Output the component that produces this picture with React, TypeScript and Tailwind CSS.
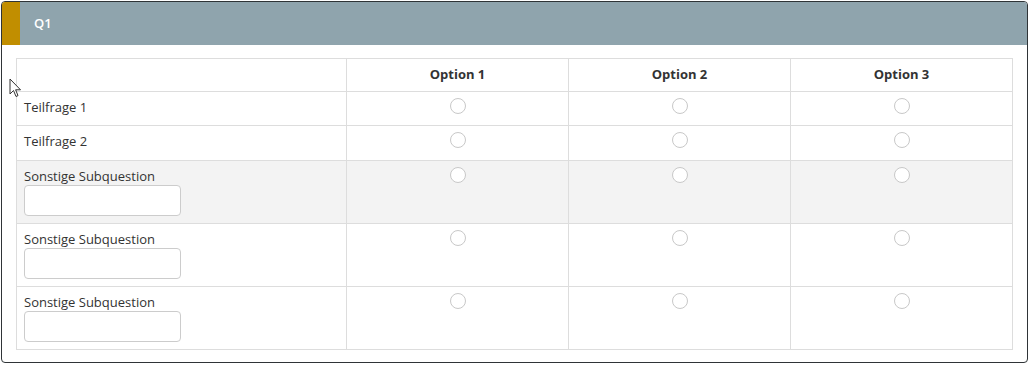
const options = ["Option 1", "Option 2", "Option 3"];

type Row = { label: string; other?: boolean; shaded?: boolean; h: string };

const rows: Row[] = [
  { label: "Teilfrage 1", h: "h-[34px]" },
  { label: "Teilfrage 2", h: "h-[35px]" },
  { label: "Sonstige Subquestion", other: true, shaded: true, h: "h-[63px]" },
  { label: "Sonstige Subquestion", other: true, h: "h-[63px]" },
  { label: "Sonstige Subquestion", other: true, h: "h-[63px]" },
];

function Radio() {
  return <span className="mx-auto block h-[16px] w-[16px] rounded-full border border-[#c8c8c8] bg-white" />;
}

function Cursor() {
  return (
    <svg className="absolute left-[9px] top-[78px]" width="13" height="20" viewBox="0 0 13 20">
      <path d="M1 1 L1 16 L4.5 12.5 L7 18.5 L9 17.6 L6.6 11.8 L11.5 11.8 Z" fill="#fff" stroke="#333" strokeWidth="1" strokeLinejoin="round" />
    </svg>
  );
}

export default function App() {
  return (
    <div className="relative h-[365px] w-[1029px] bg-white p-px font-['Open_Sans',sans-serif] text-[13px] text-[#333]">
      <div className="h-[362px] overflow-hidden rounded-[4px] border border-[#2f3437] bg-white">
        <div className="flex h-[43px] items-center bg-[#8fa4ad]">
          <div className="h-full w-[18px] bg-[#c18e00]" />
          <span className="pl-[14px] text-[13px] font-semibold text-white">Q1</span>
        </div>
        <div className="px-[14px] pt-[13px]">
          <table className="w-[996px] table-fixed border-collapse">
            <colgroup>
              <col className="w-[330px]" />
              <col className="w-[222px]" />
              <col className="w-[222px]" />
              <col className="w-[222px]" />
            </colgroup>
            <thead>
              <tr className="h-[33px]">
                <th className="border border-[#dddddd]" />
                {options.map((o) => (
                  <th key={o} className="border border-[#dddddd] text-center text-[13px] font-bold text-[#333]">
                    {o}
                  </th>
                ))}
              </tr>
            </thead>
            <tbody>
              {rows.map((r, i) => (
                <tr key={i} className={`${r.h} ${r.shaded ? "bg-[#f3f3f3]" : "bg-white"}`}>
                  <td className="border border-[#dddddd] px-[7px] pt-[6px] align-top">
                    <div className="leading-[18px]">{r.label}</div>
                    {r.other && (
                      <input className="block h-[31px] w-[157px] rounded-[4px] border border-[#cccccc] bg-white" />
                    )}
                  </td>
                  {options.map((o) => (
                    <td key={o} className="border border-[#dddddd] pt-[6px] align-top">
                      <Radio />
                    </td>
                  ))}
                </tr>
              ))}
            </tbody>
          </table>
        </div>
      </div>
      <Cursor />
    </div>
  );
}
